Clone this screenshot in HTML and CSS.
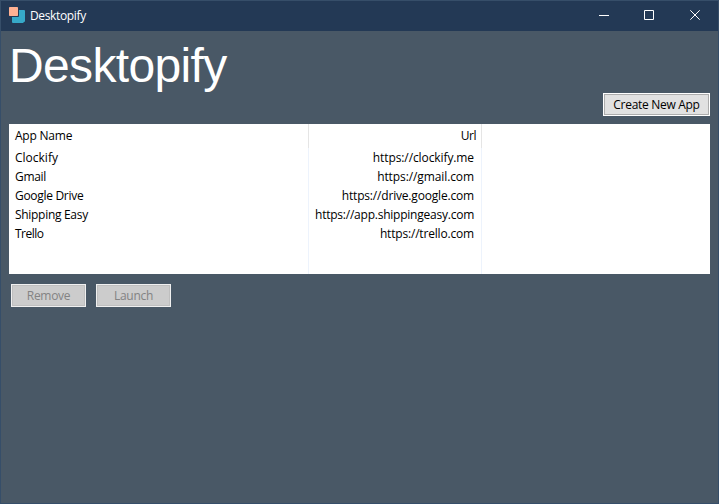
FILE: index.html
```
<!DOCTYPE html>
<html lang="en">
<head>
<meta charset="utf-8">
<title>Desktopify</title>
<link rel="stylesheet" href="styles.css">
</head>
<body>
<div class="window">
  <header class="titlebar">
    <svg class="logo" width="17" height="16" viewBox="0 0 17 16"><path fill="#36a9c9" d="M10 3h5q1 0 1 1v10q0 1-1 1l-1 1H4q-1 0-1-1v-5h6q1 0 1-1z"/><rect width="9" height="9" rx=".7" fill="#ffb193"/></svg>
    <span class="caption">Desktopify</span>
    <div class="controls">
      <svg width="46" height="30"><path d="M18 14.5h10"/></svg>
      <svg width="46" height="30"><path d="M17.500 9.500h9v9h-9z"/></svg>
      <svg width="46" height="30"><path d="M17.300 9.300l9.400 9.400m0-9.400l-9.400 9.400"/></svg>
    </div>
  </header>
  <main class="content">
    <h1>Desktopify</h1>
    <div class="toolbar"><button class="create">Create New App</button></div>
    <div class="list">
      <div class="col name">
        <div class="head">App Name</div>
        <div class="cell loose">Clockify</div>
        <div class="cell">Gmail</div>
        <div class="cell">Google Drive</div>
        <div class="cell">Shipping Easy</div>
        <div class="cell tight">Trello</div>
        <div class="rest"></div>
      </div>
      <div class="col url">
        <div class="head">Url</div>
        <div class="cell">https://clockify.me</div>
        <div class="cell">https://gmail.com</div>
        <div class="cell mid">https://drive.google.com</div>
        <div class="cell long">https://app.shippingeasy.com</div>
        <div class="cell mid">https://trello.com</div>
        <div class="rest"></div>
      </div>
    </div>
    <div class="actions">
      <button disabled>Remove</button>
      <button disabled>Launch</button>
    </div>
  </main>
</div>
</body>
</html>
```
FILE: styles.css
```
* { box-sizing: border-box; }
body {
  margin: 0;
  font: 12px/19px "Open Sans", "Noto Sans", sans-serif;
  letter-spacing: -0.3px;
  color: #000;
}
.window {
  width: 719px;
  height: 504px;
  border: 1px solid #364e69;
  background: #495866;
  display: flex;
  flex-direction: column;
  overflow: hidden;
}
.titlebar {
  height: 30px;
  flex: none;
  display: flex;
  background: #233955;
  color: #fff;
}
.logo { margin: 6px 0 0 8px; }
.caption { margin: 5px 0 0 4px; letter-spacing: -0.35px; }
.controls { display: flex; margin-left: auto; }
.controls svg { fill: none; stroke: #fff; stroke-width: 1; }
.controls svg:last-child { margin-right: -1px; }
.content { padding: 0 8px; }
h1 {
  margin: 0;
  height: 62px;
  padding-top: 8px;
  font: 48px/54px "Liberation Sans", Arial, sans-serif;
  letter-spacing: -0.65px;
  color: #fff;
}
.toolbar { display: flex; justify-content: flex-end; }
button {
  width: 75px;
  height: 23px;
  padding: 0;
  border: 1px solid #fff;
  box-shadow: inset 0 0 0 1px #adadad;
  background: #e1e1e1;
  color: #000;
  font: inherit;
  letter-spacing: inherit;
  border-radius: 0;
}
button:disabled {
  border-color: #f0f0f0;
  background: #ccc;
  box-shadow: inset 0 0 0 1px #bfbfbf;
  color: #838383;
}
.create { width: 107px; }
.list {
  display: flex;
  height: 150px;
  margin-top: 8px;
  background: #fff;
}
.col { display: flex; flex-direction: column; }
.name { width: 300px; }
.url { width: 173px; text-align: right; letter-spacing: -0.1px; }
.head {
  height: 24px;
  line-height: 24px;
  padding: 0 5px 0 6px;
  border-right: 1px solid #e5e5e5;
}
.name .head { letter-spacing: -0.22px; }
.cell { height: 19px; padding: 0 7px 0 6px; border-right: 1px solid #edf3fc; }
.loose { letter-spacing: 0; }
.mid { letter-spacing: -0.18px; }
.tight { letter-spacing: -0.5px; }
.long { letter-spacing: -0.23px; }
.url .head { letter-spacing: -0.5px; }
.rest { flex: 1; border-right: 1px solid #edf3fc; }
.actions { display: flex; gap: 10px; padding: 10px 2px; }
```
